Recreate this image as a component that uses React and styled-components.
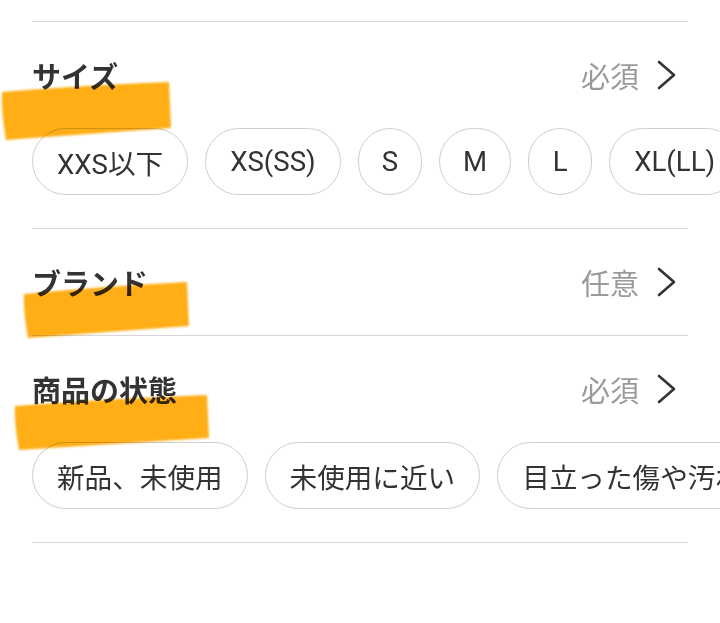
import React from 'react'
import styled, { createGlobalStyle } from 'styled-components'

const GlobalStyle = createGlobalStyle`
  body {
    margin: 0;
    background: #fff;
    font-family: Roboto, 'Noto Sans CJK JP', 'Noto Sans', sans-serif;
    color: #333;
  }
`

const Page = styled.div`
  width: 720px;
  height: 623px;
  padding: 21px 32px 0;
  box-sizing: border-box;
  overflow: hidden;
  position: relative;
`

const Section = styled.section`
  position: relative;
  border-top: 1px solid #d6d6d6;
  padding: 33px 0 33px;

  &:last-child {
    border-bottom: 1px solid #d6d6d6;
  }
`

const TitleRow = styled.div`
  position: relative;
  display: flex;
  align-items: center;
  height: 40px;
`

const Title = styled.h2`
  position: relative;
  z-index: 1;
  margin: 0;
  font-family: 'Noto Sans CJK JP', sans-serif;
  font-size: 29px;
  font-weight: 700;
  color: #333;
`

const Status = styled.span`
  margin-left: auto;
  display: flex;
  align-items: center;
  gap: 17px;
  font-family: 'Noto Sans CJK JP', sans-serif;
  font-size: 29px;
  color: #9a9a9a;
`

const Chevron = styled.svg`
  width: 22px;
  height: 32px;
  margin-right: 10px;
`

const Chips = styled.div`
  display: flex;
  gap: 17px;
  margin: 33px -32px 0 0;
  overflow: hidden;
`

const Chip = styled.span`
  flex: none;
  height: 67px;
  box-sizing: border-box;
  padding: 0 ${p => (p.$round ? 23 : 24)}px;
  min-width: ${p => (p.$round ? 64 : 0)}px;
  display: flex;
  align-items: center;
  justify-content: center;
  border: 1.5px solid #cfcfcf;
  border-radius: 34px;
  font-size: 27.6px;
  color: #333;
  white-space: nowrap;
`

const Marker = styled.svg`
  position: absolute;
  left: ${p => p.$x}px;
  top: ${p => p.$y}px;
  width: ${p => p.$w}px;
  height: ${p => p.$h}px;
  mix-blend-mode: multiply;
  pointer-events: none;
  z-index: 2;
`

const Arrow = () => (
  <Chevron viewBox="0 0 22 32">
    <path d="M3 3 L18 16 L3 29" fill="none" stroke="#333" strokeWidth="2.6" strokeLinecap="round" strokeLinejoin="round" />
  </Chevron>
)

const Highlight = ({ x, y, w, h, tilt }) => (
  <Marker $x={x} $y={y} $w={w} $h={h} viewBox={`0 0 ${w} ${h}`}>
    <defs>
      <filter id={`blur${x}${y}`}>
        <feGaussianBlur stdDeviation="1.2" />
      </filter>
    </defs>
    <path
      d={`M2 ${8 + tilt} Q ${w / 2} ${3 + tilt / 2} ${w - 3} 2 L ${w - 1} ${h - 14} Q ${w / 2} ${h - 8} 6 ${h - 2} Q 1 ${h / 2} 2 ${8 + tilt} Z`}
      fill="#ffae12"
      filter={`url(#blur${x}${y})`}
    />
  </Marker>
)

const sections = [
  {
    title: 'サイズ',
    status: '必須',
    chips: ['XXS以下', 'XS(SS)', 'S', 'M', 'L', 'XL(LL)'],
    mark: { x: -32, y: 25, w: 172, h: 62, tilt: 4 },
  },
  {
    title: 'ブランド',
    status: '任意',
    mark: { x: -10, y: 18, w: 168, h: 60, tilt: 6 },
  },
  {
    title: '商品の状態',
    status: '必須',
    chips: ['新品、未使用', '未使用に近い', '目立った傷や汚れなし'],
    mark: { x: -19, y: 24, w: 197, h: 59, tilt: 5 },
  },
]

const App = () => (
  <Page>
    <GlobalStyle />
    {sections.map(s => (
      <Section key={s.title}>
        <TitleRow>
          <Title>{s.title}</Title>
          <Status>
            {s.status}
            <Arrow />
          </Status>
          <Highlight {...s.mark} />
        </TitleRow>
        {s.chips && (
          <Chips>
            {s.chips.map(c => (
              <Chip key={c} $round={c.length === 1}>
                {c}
              </Chip>
            ))}
          </Chips>
        )}
      </Section>
    ))}
  </Page>
)

export default App
